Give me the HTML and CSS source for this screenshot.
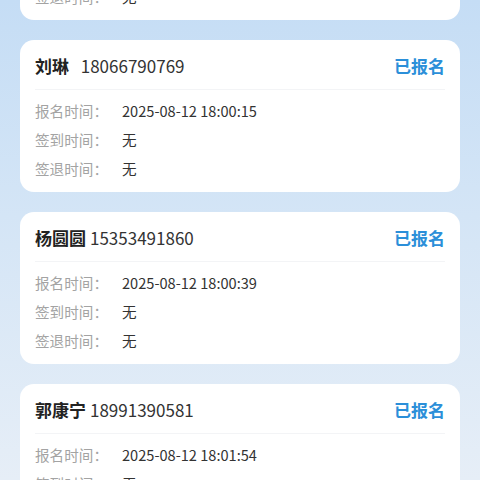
FILE: index.html
```html
<!DOCTYPE html>
<html lang="zh">
<head>
<meta charset="utf-8">
<link rel="stylesheet" href="styles.css">
</head>
<body>
<div class="page">
  <div class="list">
    <div class="card">
      <div class="head"><div class="who"><span class="name">王建国</span><span class="phone">13892045516</span></div><span class="status">已报名</span></div>
      <div class="rows">
        <div class="row"><span class="label">报名时间：</span><span class="value">2025-08-12 17:59:48</span></div>
        <div class="row"><span class="label">签到时间：</span><span class="value">无</span></div>
        <div class="row"><span class="label">签退时间：</span><span class="value">无</span></div>
      </div>
    </div>
    <div class="card">
      <div class="head"><div class="who"><span class="name">刘琳&nbsp;&nbsp;</span><span class="phone">18066790769</span></div><span class="status">已报名</span></div>
      <div class="rows">
        <div class="row"><span class="label">报名时间：</span><span class="value">2025-08-12 18:00:15</span></div>
        <div class="row"><span class="label">签到时间：</span><span class="value">无</span></div>
        <div class="row"><span class="label">签退时间：</span><span class="value">无</span></div>
      </div>
    </div>
    <div class="card">
      <div class="head"><div class="who"><span class="name">杨圆圆</span><span class="phone">15353491860</span></div><span class="status">已报名</span></div>
      <div class="rows">
        <div class="row"><span class="label">报名时间：</span><span class="value">2025-08-12 18:00:39</span></div>
        <div class="row"><span class="label">签到时间：</span><span class="value">无</span></div>
        <div class="row"><span class="label">签退时间：</span><span class="value">无</span></div>
      </div>
    </div>
    <div class="card">
      <div class="head"><div class="who"><span class="name">郭康宁</span><span class="phone">18991390581</span></div><span class="status">已报名</span></div>
      <div class="rows">
        <div class="row"><span class="label">报名时间：</span><span class="value">2025-08-12 18:01:54</span></div>
        <div class="row"><span class="label">签到时间：</span><span class="value">无</span></div>
        <div class="row"><span class="label">签退时间：</span><span class="value">无</span></div>
      </div>
    </div>
  </div>
</div>
</body>
</html>
```
FILE: styles.css
```css
html, body {
  margin: 0;
  padding: 0;
  height: 100%;
  overflow: hidden;
}
body {
  font-family: "Noto Sans CJK SC", "Noto Sans", sans-serif;
  background: linear-gradient(180deg, #c5ddf5 0%, #d4e5f6 45%, #e6eef7 100%);
}
.page {
  height: 480px;
  overflow: hidden;
}
.list {
  margin-top: -132px;
  padding: 0 20px;
  display: flex;
  flex-direction: column;
  gap: 20px;
}
.card {
  background: #ffffff;
  border-radius: 14px;
  padding: 0 15px;
  height: 152px;
  box-sizing: border-box;
}
.head {
  display: flex;
  justify-content: space-between;
  align-items: center;
  padding: 14px 0 11px;
  line-height: 24px;
  border-bottom: 1px solid #f3f4f6;
}
.who {
  display: flex;
  align-items: center;
  font-size: 17px;
  color: #222;
}
.name {
  font-weight: 700;
  margin-right: 4px;
  white-space: pre;
}
.phone {
  font-weight: 400;
  color: #333;
}
.status {
  font-size: 17px;
  font-weight: 700;
  color: #2b8fd9;
}
.rows {
  padding-top: 6px;
}
.row {
  display: flex;
  font-size: 14.6px;
  line-height: 29px;
}
.label {
  width: 87px;
  color: #a3a3a3;
}
.value {
  color: #333;
}
```
